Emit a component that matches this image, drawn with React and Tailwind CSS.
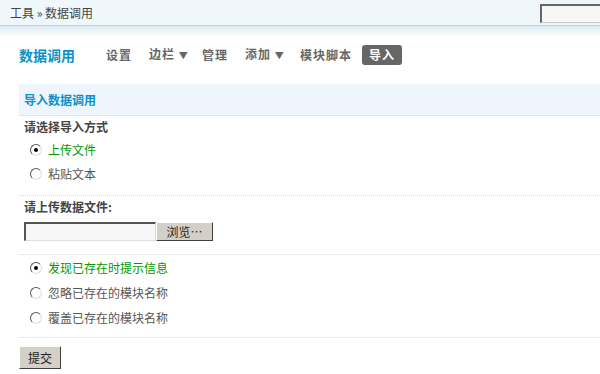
import React from "react";

function Radio({ checked }) {
  return (
    <span className="relative inline-block w-[12px] h-[12px] rounded-full border border-t-[#555] border-l-[#555] border-b-[#ddd] border-r-[#ddd] bg-white shrink-0">
      {checked && <span className="absolute left-[3px] top-[3px] w-[4px] h-[4px] rounded-full bg-black" />}
    </span>
  );
}

function RadioRow({ checked, label, h }) {
  return (
    <div className={"flex items-center pl-[11px] gap-[6px] " + (h === 25 ? "h-[25px]" : "h-[24px]")}>
      <Radio checked={checked} />
      <span className={checked ? "text-[#009900]" : "text-[#555]"}>{label}</span>
    </div>
  );
}

export default function App() {
  return (
    <div className="w-[600px] h-[374px] bg-white overflow-hidden text-[12px] leading-[14px] text-[#444]" style={{ fontFamily: '"Noto Sans CJK SC", "Noto Sans", sans-serif' }}>
      <div className="h-[26px] bg-[#eff7fb] border-b border-[#c3d0d5] flex items-center justify-between">
        <div className="pl-[10px] text-[#444] text-[12px]">工具 » 数据调用</div>
        <div className="w-[60px] h-[19px] mt-[1px] bg-[#f7f7f7] border-t-2 border-l-2 border-t-[#666] border-l-[#666] border-b border-b-[#c8c8c8]" />
      </div>
      <div className="h-[11px] bg-gradient-to-b from-[#dcebf3] to-white" />
      <div className="flex items-center h-[36px] pl-[19px]">
        <span className="w-[87px] text-[14px] font-bold text-[#0a92c8]">数据调用</span>
        <span className="w-[43px] font-bold text-[#666] tracking-[1px]">设置</span>
        <span className="w-[53px] font-bold text-[#666] tracking-[1px]">边栏 <span className="text-[9px]">▼</span></span>
        <span className="w-[43px] font-bold text-[#666] tracking-[1px]">管理</span>
        <span className="w-[55px] font-bold text-[#666] tracking-[1px]">添加 <span className="text-[9px]">▼</span></span>
        <span className="w-[62px] font-bold text-[#666] tracking-[1px]">模块脚本</span>
        <span className="w-[40px] font-bold text-white bg-[#666] rounded-[3px] h-[20px] flex items-center justify-center tracking-[1px]">导入</span>
      </div>
      <div className="ml-[19px] mt-[11px]">
        <div className="h-[32px] bg-[#eef5fc] border-b border-dotted border-[#d0d8e0] flex items-center pl-[5px] font-bold text-[#0a92c8]">导入数据调用</div>
        <div className="pl-[5px] h-[22px] flex items-center font-bold text-[#444]">请选择导入方式</div>
        <RadioRow checked label="上传文件" />
        <RadioRow label="粘贴文本" />
        <div className="h-[10px] border-b border-dotted border-[#d8d8d8]" />
        <div className="pl-[5px] h-[22px] flex items-center font-bold text-[#444]">请上传数据文件:</div>
        <div className="flex items-center pl-[5px] mt-[4px]">
          <div className="w-[132px] h-[19px] bg-[#f7f7f7] border-t-2 border-l-2 border-t-[#555] border-l-[#555] border-b border-r border-b-[#ddd] border-r-[#ddd]" />
          <div className="w-[57px] h-[19px] bg-[#d4d0c8] border border-t-white border-l-white border-b-[#404040] border-r-[#404040] flex items-center justify-center text-[#222]">浏览…</div>
        </div>
        <div className="h-[14px] border-b border-dotted border-[#d8d8d8]" />
        <RadioRow checked h={25} label="发现已存在时提示信息" />
        <RadioRow h={25} label="忽略已存在的模块名称" />
        <RadioRow h={25} label="覆盖已存在的模块名称" />
        <div className="h-[8px] border-b border-dotted border-[#d8d8d8]" />
        <div className="mt-[8px] w-[42px] h-[23px] bg-[#d4d0c8] border border-t-white border-l-white border-b-[#404040] border-r-[#404040] flex items-center justify-center text-[#222]">提交</div>
      </div>
    </div>
  );
}
